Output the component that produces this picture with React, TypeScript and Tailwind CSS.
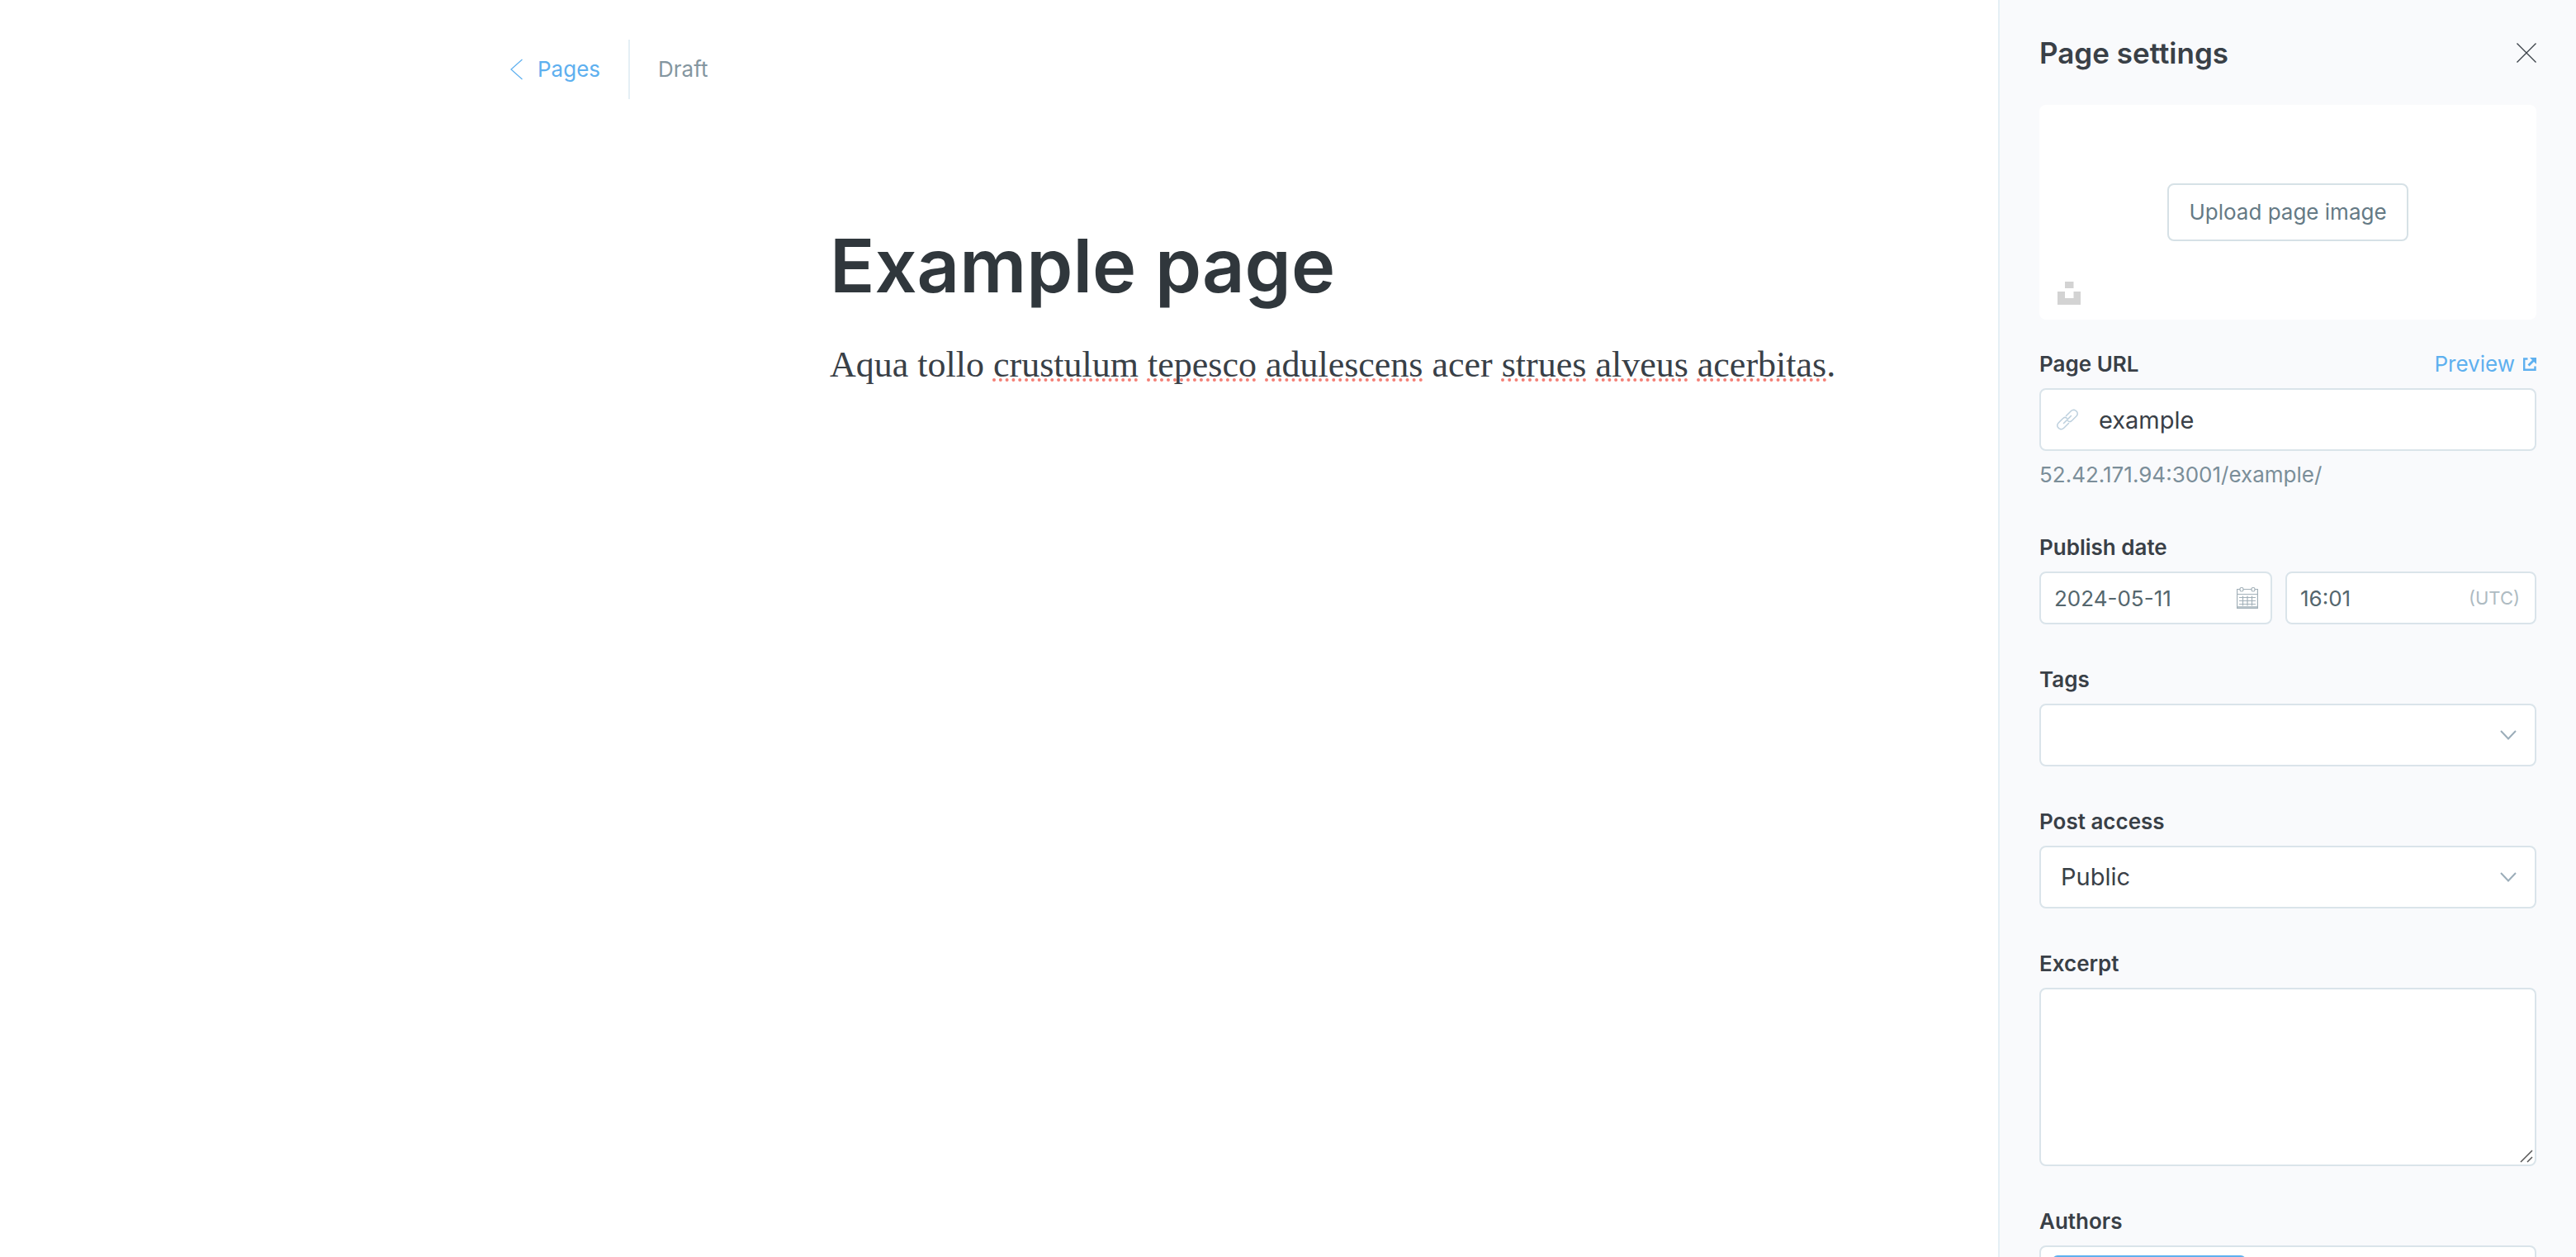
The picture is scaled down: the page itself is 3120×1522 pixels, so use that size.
import React from "react";

const label = "block text-[26px] leading-[34px] font-semibold text-[#394047]";
const field = "w-full rounded-lg border-2 border-[#dae4ea] bg-white outline-none";

function Misspelled({ children }: { children: React.ReactNode }) {
  return (
    <span className="underline decoration-dotted decoration-[#f47f75] decoration-4 underline-offset-2 [text-decoration-skip-ink:none]">
      {children}
    </span>
  );
}

function Chevron() {
  return (
    <svg
      className="pointer-events-none absolute top-1/2 right-6 h-3 w-5 -translate-y-1/2"
      viewBox="0 0 20 12"
      fill="none"
      stroke="#9badb9"
      strokeWidth="2"
      aria-hidden="true"
    >
      <path d="M1 1l9 9.5L19 1" />
    </svg>
  );
}

function BackIcon() {
  return (
    <svg className="h-[26px] w-4" viewBox="0 0 16 26" fill="none" stroke="#5eb0ef" strokeWidth="1.2" aria-hidden="true">
      <path d="M15.500 1L2 13l13.500 12" />
    </svg>
  );
}

function CloseIcon() {
  return (
    <svg className="h-6 w-6" viewBox="0 0 24 24" fill="none" stroke="#394047" strokeWidth="1.3" aria-hidden="true">
      <path d="M.5.5l23 23M23.500.5l-23 23" />
    </svg>
  );
}

function UnsplashIcon() {
  return (
    <svg className="h-7 w-7" viewBox="0 0 28 28" fill="#d3d3d3" aria-hidden="true">
      <path d="M9 0h10.500v8H9zM0 12h9v8h10.500v-8H28v16H0z" />
    </svg>
  );
}

function ExternalIcon() {
  return (
    <svg className="h-4 w-4" viewBox="0 0 16 16" fill="none" stroke="#5eb0ef" strokeWidth="2.400" aria-hidden="true">
      <path d="M5.500 1.500H1.200v13.300h13.300V10.500" />
      <path d="M6.500 9.500l6-6" strokeWidth="2.800" />
      <path d="M8 0h8v8z" fill="#5eb0ef" stroke="none" />
    </svg>
  );
}

function LinkIcon() {
  return (
    <svg
      className="pointer-events-none absolute top-1/2 left-5 h-7 w-7 -translate-y-1/2"
      viewBox="0 0 28 28"
      fill="none"
      stroke="#bdd0de"
      strokeWidth="1.500"
      strokeLinecap="round"
      strokeLinejoin="round"
      aria-hidden="true"
    >
      <path d="M9.500 18.500l9-9" />
      <path d="M12.500 9.500l5.800-5.800a5 5 0 0 1 3.700-1.400l2 .8 1.800 1.900a4.600 4.600 0 0 1-1 5l-5.300 5.300a3.600 3.600 0 0 1-5 .2" />
      <path d="M15.500 18.500l-5.800 5.800a5 5 0 0 1-3.700 1.400l-2-.8L2.200 23a4.600 4.600 0 0 1 1-5l5.300-5.300a3.600 3.600 0 0 1 5-.2" />
    </svg>
  );
}

function CalendarIcon() {
  return (
    <svg
      className="pointer-events-none absolute top-1/2 right-4 h-7 w-7 -translate-y-1/2"
      viewBox="0 0 28 28"
      fill="none"
      stroke="#a3b1b9"
      strokeWidth="1.200"
      aria-hidden="true"
    >
      <path d="M5 3.500H1.600v22.800h24.800V3.500H23M9 3.500h10M1.600 9.500h24.800M1.600 24.800h24.800" />
      <rect x="5" y="1.500" width="4" height="4.500" rx="1.800" />
      <rect x="19" y="1.500" width="4" height="4.500" rx="1.800" />
      <path d="M4 13.500h20M4 17.500h20M4 21.500h20M8.500 11.500v12M14 11.500v12M19.500 11.500v12" />
    </svg>
  );
}

export default function App() {
  return (
    <div className="flex h-screen overflow-hidden bg-white font-['Inter',sans-serif] text-[#394047]">
      <main className="min-w-0 flex-1">
        <header className="flex items-center pt-12 pl-[617px]">
          <a href="#pages" className="flex h-[72px] items-center gap-[18px] border-r-2 border-[#e5eff5] pr-[34px] text-[26px] leading-8 text-[#5eb0ef]">
            <BackIcon />
            Pages
          </a>
          <span className="pl-[34px] text-[26px] leading-8 text-[#8496a0]">Draft</span>
        </header>
        <article className="pt-[146px] pl-[1005px]">
          <h1 className="text-[90px] leading-[112px] font-semibold whitespace-nowrap text-[#30373c]">Example page</h1>
          <p className="mt-8 font-['Liberation_Serif',serif] text-[44px] leading-[64px] whitespace-nowrap">
            Aqua tollo <Misspelled>crustulum</Misspelled> <Misspelled>tepesco</Misspelled>{" "}
            <Misspelled>adulescens</Misspelled> acer <Misspelled>strues</Misspelled>{" "}
            <Misspelled>alveus</Misspelled> <Misspelled>acerbitas</Misspelled>.
          </p>
        </article>
      </main>

      <aside className="h-full w-[700px] shrink-0 overflow-hidden border-l-2 border-[#e5eff5] bg-[#f9fafc] px-12">
        <div className="flex h-[127px] items-center justify-between">
          <h2 className="text-[35px] leading-10 font-semibold">Page settings</h2>
          <button type="button" aria-label="Close">
            <CloseIcon />
          </button>
        </div>

        <div className="relative flex h-[260px] items-center justify-center rounded-lg bg-white">
          <button type="button" className="h-[70px] rounded-lg border-2 border-[#d6e1e6] px-6 text-[26px] leading-8 text-[#657a85]">
            Upload page image
          </button>
          <button type="button" aria-label="Choose from Unsplash" className="absolute bottom-[18px] left-[22px] flex">
            <UnsplashIcon />
          </button>
        </div>

        <form className="flex flex-col gap-[50px] pt-[37px]">
          <div>
            <div className="mb-3 flex items-center justify-between">
              <label htmlFor="url" className={label}>Page URL</label>
              <a href="#preview" className="flex items-center gap-2.5 text-[26px] leading-[34px] text-[#5eb0ef]">
                Preview
                <ExternalIcon />
              </a>
            </div>
            <div className="relative">
              <LinkIcon />
              <input id="url" type="text" defaultValue="example" className={`${field} h-[76px] pr-6 pl-[70px] text-[29px]`} />
            </div>
            <p className="mt-3 mb-1 text-[26px] leading-[34px] text-[#7b8e99]">52.42.171.94:3001/example/</p>
          </div>

          <div>
            <label htmlFor="date" className={`${label} mb-3`}>Publish date</label>
            <div className="flex gap-4">
              <div className="relative w-[282px]">
                <input id="date" type="text" defaultValue="2024-05-11" className={`${field} h-16 px-4 text-[26px] text-[#54666d]`} />
                <CalendarIcon />
              </div>
              <div className="relative flex-1">
                <input aria-label="Publish time" type="text" defaultValue="16:01" className={`${field} h-16 px-4 text-[26px] text-[#54666d]`} />
                <span className="absolute top-1/2 right-5 -translate-y-1/2 text-[22px] leading-8 text-[#aebbc2]">(UTC)</span>
              </div>
            </div>
          </div>

          <div>
            <label htmlFor="tags" className={`${label} mb-3`}>Tags</label>
            <div className="relative">
              <input id="tags" type="text" className={`${field} h-[76px] px-6 text-[29px]`} />
              <Chevron />
            </div>
          </div>

          <div>
            <label htmlFor="access" className={`${label} mb-3`}>Post access</label>
            <div className="relative">
              <select id="access" className={`${field} h-[76px] appearance-none px-6 text-[29px]`}>
                <option>Public</option>
              </select>
              <Chevron />
            </div>
          </div>

          <div>
            <label htmlFor="excerpt" className={`${label} mb-3`}>Excerpt</label>
            <div className="relative">
              <textarea id="excerpt" className={`${field} block h-[216px] resize-none px-6 py-4 text-[29px]`} />
              <svg
                className="pointer-events-none absolute right-1 bottom-1 h-4 w-4"
                viewBox="0 0 16 16"
                fill="none"
                stroke="#555555"
                strokeWidth="1.500"
                aria-hidden="true"
              >
                <path d="M1 15L15 1M9 15l6-6" />
              </svg>
            </div>
          </div>

          <div>
            <label htmlFor="authors" className={`${label} mb-3`}>Authors</label>
            <div className={`${field} flex h-[76px] px-3.5 py-2.5`}>
              <span className="h-12 w-[234px] rounded-md bg-[#5eb0ef]" />
              <input id="authors" type="text" className="min-w-0 flex-1 outline-none" />
            </div>
          </div>
        </form>
      </aside>
    </div>
  );
}
